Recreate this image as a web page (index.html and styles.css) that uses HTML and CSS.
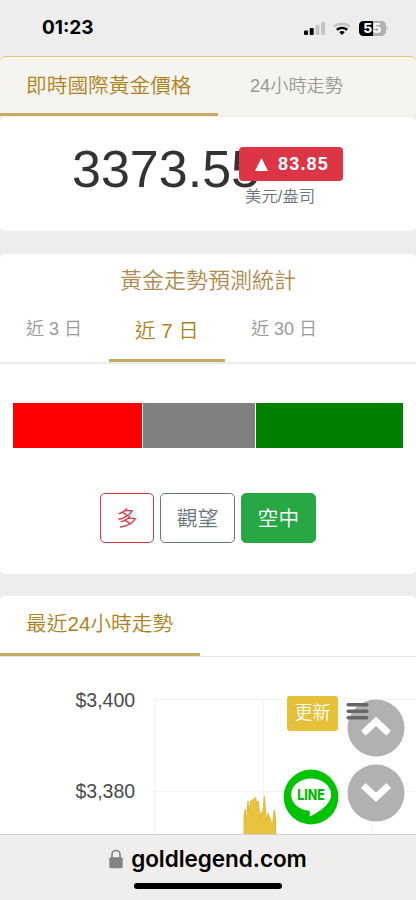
FILE: index.html
```
<!DOCTYPE html>
<html lang="zh-Hant">
<head>
<meta charset="utf-8">
<meta name="viewport" content="width=device-width, initial-scale=1">
<title>goldlegend.com</title>
<link rel="stylesheet" href="styles.css">
</head>
<body>
<div class="screen">
  <header class="status">
    <span class="clock">01:23</span>
    <svg class="status-icons" width="86" height="18" viewBox="0 0 86 18">
      <rect x="2" y="11.500" width="4" height="4.500" rx="1"/>
      <rect x="7.700" y="9" width="4" height="7" rx="1"/>
      <rect x="13.500" y="6" width="4" height="10" rx="1" fill="#c4c4c4"/>
      <rect x="19.100" y="3" width="4" height="13" rx="1" fill="#c4c4c4"/>
      <path d="M32 7.600a13 13 0 0 1 16 0" fill="none" stroke="#c4c4c4" stroke-width="2.600"/>
      <path d="M34.800 10.700a8.500 8.500 0 0 1 10.400 0" fill="none" stroke="#000" stroke-width="2.500"/>
      <path d="M37.200 13.100a4.500 4.500 0 0 1 5.600 0L40 16z"/>
      <rect x="57" y="2" width="27" height="15" rx="4.500" fill="#b0b0b0"/>
      <path d="M71 2v15h-9.500a4.500 4.500 0 0 1-4.500-4.500v-6a4.500 4.500 0 0 1 4.500-4.500z"/>
      <path d="M84.600 7.300q2.200 2.200 0 4.400z" fill="#b0b0b0"/>
      <text class="battery" x="61.200" y="14" textLength="18" lengthAdjust="spacingAndGlyphs">55</text>
    </svg>
  </header>

  <nav class="tabs tabs-main">
    <a class="tab active">即時國際黃金價格</a>
    <a class="tab">24小時走勢</a>
  </nav>
  <section class="card price">
    <span class="amount">3373.55</span>
    <div class="change">
      <span class="badge"><svg width="13" height="13" viewBox="0 0 13 13"><path d="M6.500 0L13 13H0z"/></svg>83.85</span>
      <span class="unit">美元/盎司</span>
    </div>
  </section>

  <section class="card forecast">
    <h2>黃金走勢預測統計</h2>
    <nav class="tabs tabs-days">
      <a class="tab">近 3 日</a>
      <a class="tab active">近 7 日</a>
      <a class="tab">近 30 日</a>
    </nav>
    <div class="votes"><i class="up"></i><i class="hold"></i><i class="down"></i></div>
    <div class="buttons">
      <button class="btn danger">多</button>
      <button class="btn neutral">觀望</button>
      <button class="btn success">空中</button>
    </div>
  </section>

  <section class="card trend">
    <nav class="tabs tabs-trend"><a class="tab active">最近24小時走勢</a></nav>
    <svg class="chart" width="416" height="177" viewBox="0 657 416 177">
      <path d="M154 699.500H416M154 791.500H416M154.500 699V834M263.500 699V834M372.500 699V834" stroke="#f3f3f3" fill="none"/>
      <path class="series" d="M244 835V816L245.300 809 246.300 822 248 801 249 812 250.700 801 252.300 800 255.700 797.500 256.700 805 257.700 801 258.700 802 259.700 820 261.300 812 263 811 264.300 796.500 265.700 812 266.700 821 268.300 813.500 269.700 817 271 822 272.700 823 274.300 810 275.500 818V835Z"/>
      <text x="75.500" y="707">$3,400</text>
      <text x="75.500" y="798">$3,380</text>
    </svg>
    <button class="refresh">更新</button>
  </section>

  <footer class="browser">
    <div class="address">
      <svg width="14" height="20" viewBox="0 0 14 20"><path d="M3 9V5.500a4 4 0 0 1 8 0V9" fill="none" stroke="#838385" stroke-width="1.700"/><rect x=".3" y="8.200" width="13.400" height="11" rx="1.600" fill="#838385"/></svg>
      <span>goldlegend.com</span>
    </div>
    <div class="home"></div>
  </footer>

  <svg class="round top" width="58" height="58" viewBox="0 0 58 58"><circle cx="29" cy="29" r="28.500"/><path d="M16.300 34.300L29 22.500l12.700 11.800"/></svg>
  <svg class="menu" width="24" height="20" viewBox="0 0 24 20"><path d="M3.200 2.700h18.600M3.200 9.200h18.600M3.200 15.700h18.600"/></svg>
  <svg class="round bottom" width="58" height="58" viewBox="0 0 58 58"><circle cx="29" cy="29" r="28.500"/><path d="M16.300 21.500L29 33.300l12.700-11.800"/></svg>
  <svg class="line" width="56" height="56" viewBox="0 0 56 56">
    <circle cx="28" cy="28" r="27.400" fill="#00c300"/>
    <path d="M28 9.500C17 9.500 8.200 16.700 8.200 25.700c0 8 7 14.500 16.600 15.900 2 .3 2.300 1 2.100 2.500l-.4 2.200c-.1 1 .6 1.300 1.700.7 6.200-3.300 20-11.500 20-21.300C48.200 16.700 39 9.500 28 9.500z" fill="#fff"/>
    <text class="line-label" x="14.200" y="30.500" textLength="27.500" lengthAdjust="spacingAndGlyphs">LINE</text>
  </svg>
</div>
</body>
</html>
```
FILE: styles.css
```
* { box-sizing: border-box; }
body {
  margin: 0;
  background: #ededed;
  font-family: "Liberation Sans", "Noto Sans CJK TC DemiLight", "Noto Sans CJK TC", sans-serif;
  font-weight: 350;
  color: #333;
}
.screen {
  position: relative;
  width: 416px;
  height: 900px;
  overflow: hidden;
  display: flex;
  flex-direction: column;
}
svg { display: block; flex: none; }
.status {
  height: 56px;
  flex: none;
  display: flex;
  justify-content: space-between;
  align-items: center;
  padding: 0 28px 0 42px;
}
.clock { font: 700 19px/22px Inter, sans-serif; color: #000; }
.battery { font: 800 13px Inter, sans-serif; fill: #fff; }
.tabs { display: flex; flex: none; white-space: nowrap; }
.tab { color: #999; font-size: 18.200px; border-bottom: 3px solid transparent; }
.tab.active { color: #ad831c; font-size: 20.700px; border-bottom-color: #c8ab62; }
.tabs-main {
  height: 60px;
  background: #f5f4ef;
  border-top: 1px solid #e3c577;
  border-radius: 6px;
}
.tabs-main .tab { padding: 0 26px; line-height: 58px; height: 59px; }
.tabs-main .active { width: 218px; line-height: 57px; margin-right: 6px; }
.card { background: #fff; border-radius: 5px; flex: none; }
.price {
  height: 114px;
  margin-top: 1px;
  padding-left: 72px;
  display: flex;
  align-items: flex-start;
}
.amount { font-size: 52px; line-height: 60px; margin-top: 22px; width: 167px; white-space: nowrap; }
.change { position: relative; display: flex; flex-direction: column; align-items: flex-start; margin-top: 30px; }
.badge {
  width: 104px;
  height: 34px;
  display: flex;
  align-items: center;
  gap: 10px;
  padding-left: 16px;
  border-radius: 4px;
  background: #dc3545;
  color: #fff;
  font-size: 18px;
  font-weight: 700;
  letter-spacing: 1.200px;
}
.badge svg { fill: #fff; }
.unit { font-size: 16.400px; line-height: 22px; margin: 4px 0 0 6px; color: #6c757d; }
.forecast { height: 320px; margin-top: 23px; }
h2 { margin: 0; padding-top: 10px; font-size: 22px; line-height: 34px; font-weight: 350; text-align: center; color: #b08b4f; }
.tabs-days { height: 66px; border-bottom: 2px solid #e9ebef; }
.tabs-days .tab { padding: 0 26px; line-height: 62px; height: 64px; font-size: 18px; }
.tabs-days .tab:first-child { width: 109px; }
.tabs-days .tab.active { width: 116px; line-height: 65px; font-size: 20.500px; }
.votes { display: flex; gap: 1px; height: 45px; margin: 39px 13px 0; }
.votes .up { flex: 129; background: red; }
.votes .hold { flex: 112; background: gray; }
.votes .down { flex: 147; background: green; }
.buttons { display: flex; justify-content: center; gap: 6px; margin-top: 45px; }
.btn {
  width: 75px;
  height: 50px;
  padding: 0 0 3px;
  border: 1.500px solid;
  border-radius: 5px;
  background: #fff;
  font: inherit;
  font-size: 20.700px;
}
.danger { width: 54px; color: #dc3545; }
.neutral { color: #6c757d; }
.success { background: #28a745; border-color: #28a745; color: #fff; }
.trend { position: relative; margin-top: 22px; height: 238px; border-radius: 5px 5px 0 0; }
.tabs-trend { height: 61px; border-bottom: 1px solid #e4e4e6; }
.tabs-trend .tab { width: 200px; padding-left: 26px; line-height: 56px; height: 60px; }
.chart text { font-size: 19.500px; fill: #4b4b4b; }
.series { fill: #e8c43e; stroke: #dfb936; stroke-width: 1; }
.refresh {
  position: absolute;
  left: 287px;
  top: 100px;
  width: 51px;
  height: 35px;
  padding: 0 0 5px;
  border: 0;
  border-radius: 3px;
  background: #e5c13a;
  color: #fff;
  font: inherit;
  font-size: 18px;
}
.round { position: absolute; left: 347px; }
.round circle { fill: #b1b1b1; }
.round path { fill: none; stroke: #fff; stroke-width: 6.800; }
.top { top: 699px; }
.bottom { top: 764px; }
.menu { position: absolute; left: 345px; top: 702px; }
.menu path { stroke: #666; stroke-width: 3.500; stroke-linecap: round; }
.line { position: absolute; left: 283px; top: 769px; }
.line-label { font: 800 14px Inter, sans-serif; fill: #00b900; }
.browser { height: 66px; flex: none; background: #efeeec; border-top: 1px solid #cfcfcf; }
.address { display: flex; align-items: center; justify-content: center; gap: 8px; height: 48px; color: #000; font: 600 22.500px/46px Inter, sans-serif; letter-spacing: -.050px; }
.address span { padding-bottom: 1px; }
.home { width: 148px; height: 6px; margin: 0 auto; border-radius: 3px; background: #000; }
```
